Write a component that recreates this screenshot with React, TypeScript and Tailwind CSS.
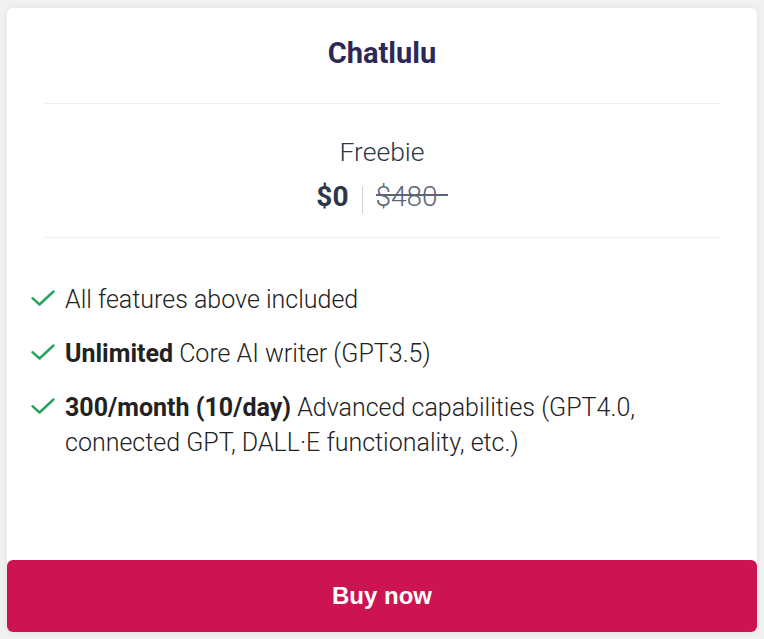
import React from "react";

function Check() {
  return (
    <svg width="24" height="16" viewBox="0 0 24 16" fill="none" className="shrink-0">
      <path d="M1.5 8.2 L8.5 14.5 L22.5 1.5" stroke="#27a35c" strokeWidth="2.4" strokeLinecap="round" strokeLinejoin="round" />
    </svg>
  );
}

export default function App() {
  const font = { fontFamily: "Roboto, 'Open Sans', sans-serif" };
  return (
    <div className="w-[764px] h-[639px] bg-[#f1f1f1] pt-[8px] px-[7px] pb-[7px]" style={font}>
      <div className="h-[624px] w-[750px] bg-white rounded-md shadow-[0_0_6px_rgba(0,0,0,0.07)] flex flex-col">
        <div className="pt-[28px] text-center text-[29px] leading-[34px] font-bold text-[#2c2957]">Chatlulu</div>
        <div className="mx-[37px] mt-[33px] h-px bg-[#efefef]" />
        <div className="mt-[32px] text-center text-[26.5px] leading-[32px] font-light text-[#2d3748]">Freebie</div>
        <div className="mt-[13px] flex items-center justify-center h-[32px] text-[28px] leading-[32px]">
          <span className="font-bold text-[#2d3748]">$0</span>
          <span className="mx-[13px] w-px h-[28px] bg-[#d2d2d2] mt-[6px]" />
          <span className="relative font-light text-[#5b6577] mr-[10px]">
            $480
            <span className="absolute left-0 right-[-10px] top-[13px] h-[2px] bg-[#5b6577]" />
          </span>
        </div>
        <div className="mx-[37px] mt-[24px] h-px bg-[#efefef]" />
        <ul className="mt-[44px] pl-[24px] pr-[40px] flex flex-col gap-[19px] text-[25px] leading-[35px] text-[#222] font-light">
          <li className="flex gap-[10px]">
            <span className="pt-[8px]"><Check /></span>
            <span>All features above included</span>
          </li>
          <li className="flex gap-[10px]">
            <span className="pt-[8px]"><Check /></span>
            <span><b className="font-bold">Unlimited</b> Core AI writer (GPT3.5)</span>
          </li>
          <li className="flex gap-[10px]">
            <span className="pt-[8px]"><Check /></span>
            <span><b className="font-bold">300/month (10/day)</b> Advanced capabilities (GPT4.0, connected GPT, DALL·E functionality, etc.)</span>
          </li>
        </ul>
        <button className="mt-auto h-[72px] w-full rounded-md bg-[#cc1452] text-white text-[24px] font-bold" style={{ fontFamily: "'Liberation Sans', Arial, sans-serif" }}>
          Buy now
        </button>
      </div>
    </div>
  );
}
